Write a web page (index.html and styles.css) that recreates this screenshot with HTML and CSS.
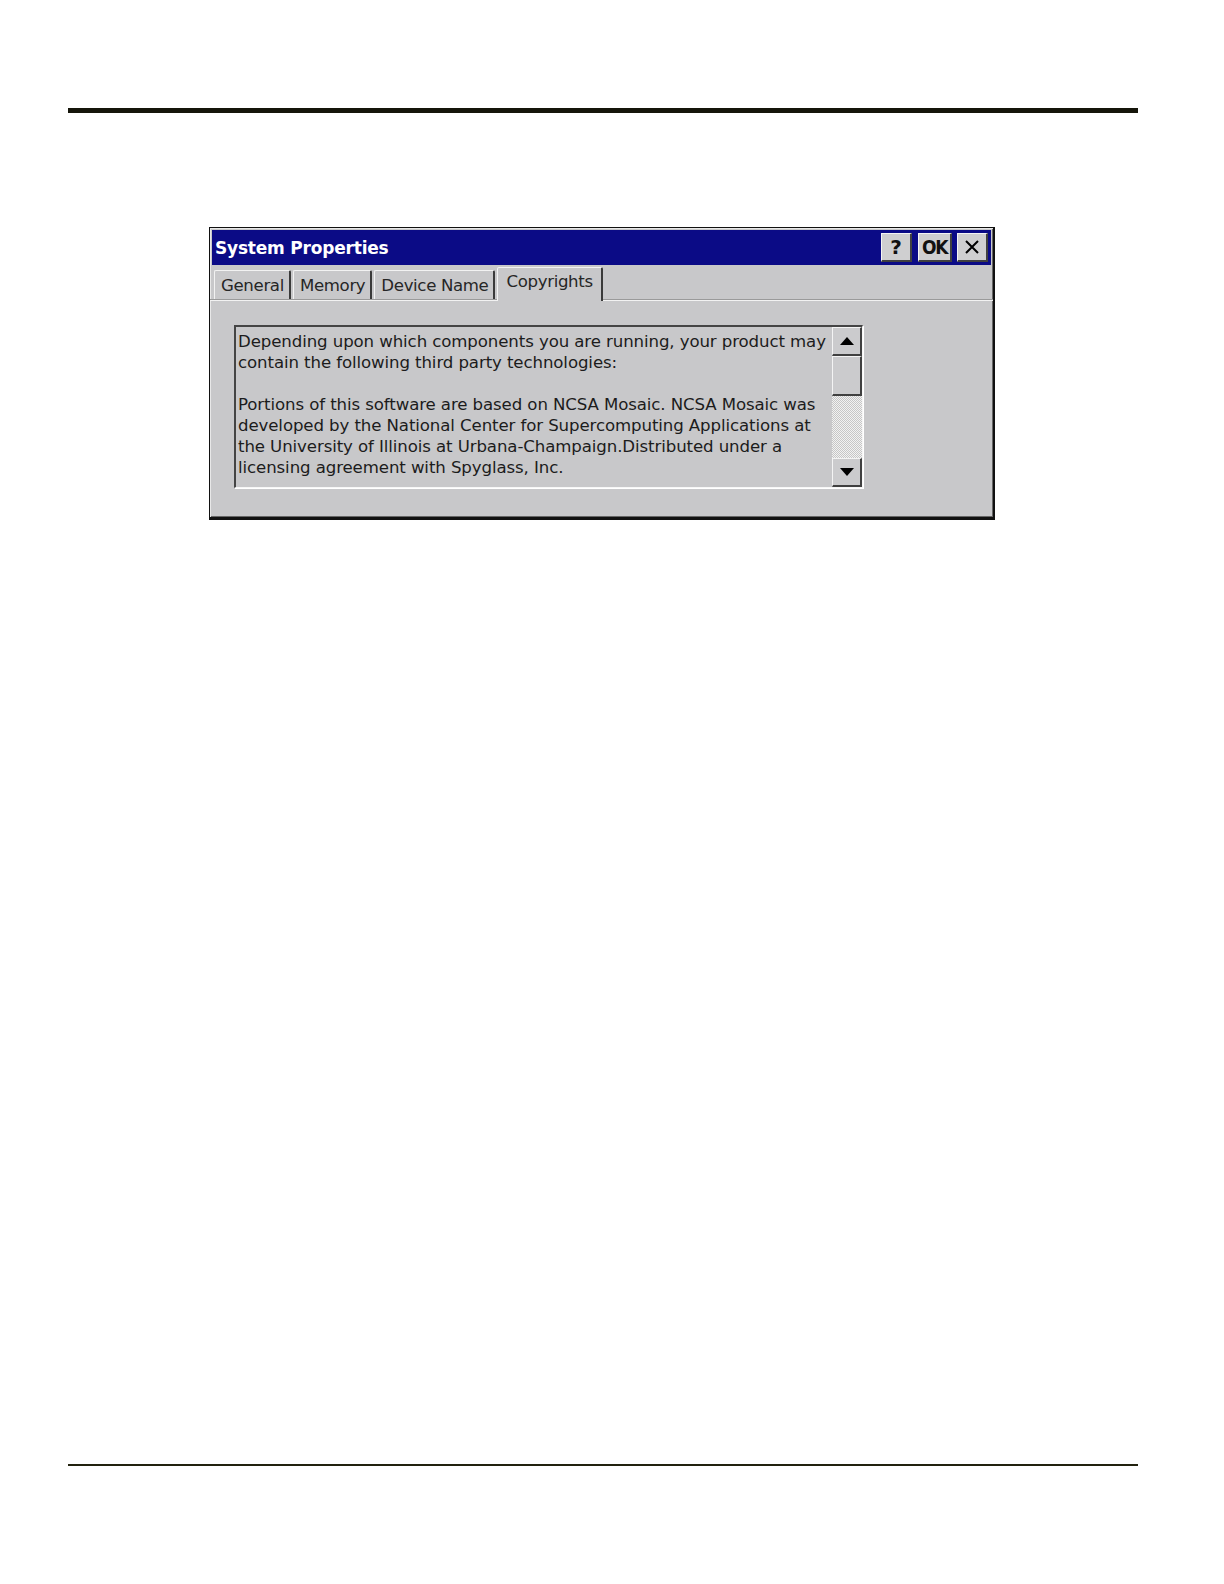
FILE: index.html
```html
<!DOCTYPE html>
<html>
<head>
<meta charset="utf-8">
<link rel="stylesheet" href="styles.css">
</head>
<body>
<div class="page">
  <div class="rule-top"></div>
  <div class="dialog">
    <div class="titlebar">
      <span class="title">System Properties</span>
      <div class="tbtns">
        <div class="tbtn q">?</div>
        <div class="tbtn ok">OK</div>
        <div class="tbtn x"><svg width="16" height="16" viewBox="0 0 16 16"><path d="M2 2 L14 14 M14 2 L2 14" stroke="#000" stroke-width="2"/></svg></div>
      </div>
    </div>
    <div class="tabs">
      <div class="tab">General</div>
      <div class="tab">Memory</div>
      <div class="tab">Device Name</div>
      <div class="tab active">Copyrights</div>
    </div>
    <div class="panel">
      <div class="textbox">
        <div class="text">
          <p>Depending upon which components you are running, your product may<br>contain the following third party technologies:</p>
          <p>Portions of this software are based on NCSA Mosaic. NCSA Mosaic was<br>developed by the National Center for Supercomputing Applications at<br>the University of Illinois at Urbana-Champaign.Distributed under a<br>licensing agreement with Spyglass, Inc.</p>
        </div>
        <div class="scroll">
          <div class="sbtn"><svg width="14" height="8" viewBox="0 0 14 8"><path d="M7 0 L14 8 L0 8 Z" fill="#000"/></svg></div>
          <div class="thumb"></div>
          <div class="track"></div>
          <div class="sbtn"><svg width="14" height="8" viewBox="0 0 14 8"><path d="M0 0 L14 0 L7 8 Z" fill="#000"/></svg></div>
        </div>
      </div>
    </div>
  </div>
  <div class="rule-bottom"></div>
</div>
</body>
</html>
```

FILE: styles.css
```css
html, body {
  margin: 0;
  padding: 0;
  background: #fff;
}
.page {
  min-height: 1584px;
  display: flex;
  flex-direction: column;
  padding-top: 108px;
  box-sizing: border-box;
}
.rule-top {
  margin-left: 68px;
  width: 1070px;
  height: 5px;
  background: #15150a;
}
.rule-bottom {
  margin-top: auto;
  margin-bottom: 118px;
  margin-left: 68px;
  width: 1070px;
  height: 2px;
  background: #22220f;
}
.dialog {
  margin-top: 114px;
  margin-left: 209px;
  width: 786px;
  height: 293px;
  box-sizing: border-box;
  border-style: solid;
  border-color: #111;
  border-width: 1px 2px 3px 1px;
  background: #c8c8ca;
  box-shadow: inset 1px 1px 0 #e8e8e8, inset -1px -1px 0 #666;
  display: flex;
  flex-direction: column;
  font-family: "DejaVu Sans", Verdana, sans-serif;
}
.titlebar {
  margin: 2px 2px 0 2px;
  height: 35px;
  background: #0b0b86;
  display: flex;
  align-items: center;
  justify-content: space-between;
  padding-left: 3px;
  padding-right: 3px;
}
.title {
  color: #fff;
  font-weight: bold;
  font-size: 17px;
  letter-spacing: -0.2px;
}
.tbtns {
  display: flex;
  gap: 5px;
}
.tbtn {
  width: 31px;
  height: 29px;
  box-sizing: border-box;
  background: #cfcfd0;
  border-style: solid;
  border-width: 1px 2px 2px 1px;
  border-color: #f4f4f4 #404040 #404040 #f4f4f4;
  display: flex;
  align-items: center;
  justify-content: center;
  color: #111;
  font-weight: bold;
}
.tbtn.q {
  font-size: 20px;
}
.tbtn.ok {
  width: 34px;
  margin-left: 1px;
  font-size: 19px;
  letter-spacing: -1.5px;
  font-family: "DejaVu Sans Condensed", "DejaVu Sans", sans-serif;
}
.tabs {
  display: flex;
  align-items: flex-end;
  height: 36px;
  padding-left: 4px;
  box-sizing: border-box;
  border-bottom: 1px solid #f2f2f2;
  box-shadow: 0 -1px 0 #9a9a9a inset;
}
.tab {
  height: 29px;
  box-sizing: border-box;
  padding: 0 5px 0 6px;
  margin-right: 2px;
  border-style: solid;
  border-width: 1px 2px 0 1px;
  border-color: #f2f2f2 #3a3a3a transparent #f2f2f2;
  border-radius: 2px 2px 0 0;
  font-size: 16.6px;
  color: #262626;
  display: flex;
  align-items: center;
  letter-spacing: -0.35px;
  margin-bottom: 1px;
}
.tab.active {
  height: 34px;
  margin-bottom: -1px;
  background: #c8c8ca;
  padding: 0 8px 6px 8px;
  margin-left: 0;
}
.panel {
  flex: 1;
  padding: 24px 0 0 24px;
}
.textbox {
  width: 629px;
  height: 163px;
  box-sizing: border-box;
  border-style: solid;
  border-width: 2px 1px 1px 2px;
  border-color: #444 #f6f6f6 #f6f6f6 #444;
  box-shadow: 1px 1px 0 #fff;
  display: flex;
  background: #c8c8ca;
}
.text {
  flex: 1;
  padding: 4px 0 0 2px;
  font-size: 16.6px;
  line-height: 21px;
  color: #1c1c1c;
  letter-spacing: -0.1px;
  white-space: nowrap;
  overflow: hidden;
}
.text p {
  margin: 0 0 21px 0;
}
.scroll {
  width: 30px;
  flex: none;
  display: flex;
  flex-direction: column;
}
.sbtn, .thumb {
  box-sizing: border-box;
  background: #cbcbcd;
  border-style: solid;
  border-width: 1px 2px 2px 1px;
  border-color: #f4f4f4 #404040 #404040 #f4f4f4;
  display: flex;
  align-items: center;
  justify-content: center;
}
.sbtn {
  height: 29px;
}
.thumb {
  height: 40px;
}
.track {
  flex: 1;
  background-image: repeating-conic-gradient(#f2f2f2 0 25%, #c6c6c6 0 50%);
  background-size: 2px 2px;
}
```
